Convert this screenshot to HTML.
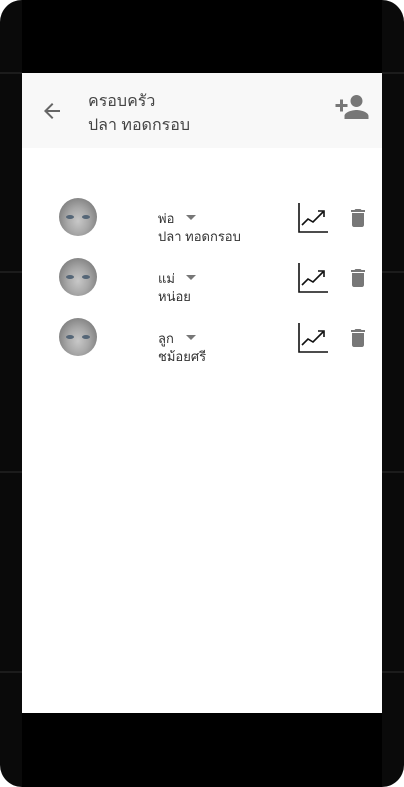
<!DOCTYPE html>
<html><head><meta charset="utf-8"><style>
*{margin:0;padding:0;box-sizing:border-box}
body{width:404px;height:787px;background:#fff;overflow:hidden;position:relative;font-family:"Liberation Sans","Noto Sans CJK SC",sans-serif}
.frame{position:absolute;left:0;top:0;width:404px;height:787px;background:#0a0a0a;border-radius:22px}
.line{position:absolute;left:0;width:404px;height:2px;background:#1c1c1c}
.inner{position:absolute;left:22px;top:0;width:360px;height:787px;background:#000}
.screen{position:absolute;left:22px;top:73px;width:360px;height:640px;background:#fff}
.hdr{position:absolute;left:0;top:0;width:360px;height:75px;background:#f8f8f8}
.t{position:absolute;color:#444;font-size:16px;white-space:nowrap}
.s{position:absolute;color:#333;font-size:13px;white-space:nowrap}
.av{position:absolute;width:38px;height:38px;border-radius:50%;background:radial-gradient(ellipse at 50% 60%,#c8c8c8 0,#a8a8a8 40%,#666 100%);overflow:hidden}
.av:before{content:"";position:absolute;left:7px;top:17px;width:8px;height:4px;border-radius:50%;background:#567}
.av:after{content:"";position:absolute;left:23px;top:17px;width:8px;height:4px;border-radius:50%;background:#567}
.tri{position:absolute;width:0;height:0;border-left:5px solid transparent;border-right:5px solid transparent;border-top:5px solid #777}
</style></head><body>
<div class="frame"></div>
<div class="line" style="top:72px"></div><div class="line" style="top:271px"></div><div class="line" style="top:471px"></div><div class="line" style="top:671px"></div>
<div class="inner"></div>
<div class="screen">
<div class="hdr">
<svg style="position:absolute;left:18px;top:26px" width="24" height="24" viewBox="0 0 24 24"><path d="M20 11H7.83l5.59-5.59L12 4l-8 8 8 8 1.41-1.41L7.83 13H20v-2z" fill="#666"/></svg>
<div class="t" style="left:66px;top:16px">ครอบครัว</div>
<div class="t" style="left:66px;top:40px">ปลา ทอดกรอบ</div>
<svg style="position:absolute;left:312px;top:16px" width="36" height="36" viewBox="0 0 24 24"><path d="M15 12c2.210 0 4-1.79 4-4s-1.79-4-4-4-4 1.79-4 4 1.790 4 4 4zm-9-2V7H4v3H1v2h3v3h2v-3h3v-2H6zm9 4c-2.67 0-8 1.34-8 4v2h16v-2c0-2.66-5.33-4-8-4z" fill="#777"/></svg>
</div>
</div>
<div id="rows"></div>
<script>
var d=[["พ่อ","ปลา ทอดกรอบ",198],["แม่","หน่อย",258],["ลูก","ชม้อยศรี",318]],h="";
d.forEach(function(r){var y=r[2];
h+='<div class="av" style="left:59px;top:'+y+'px"></div>';
h+='<div class="s" style="left:158px;top:'+(y+10)+'px">'+r[0]+'</div>';
h+='<div class="tri" style="left:186px;top:'+(y+17)+'px"></div>';
h+='<div class="s" style="left:158px;top:'+(y+28)+'px">'+r[1]+'</div>';
h+='<svg style="position:absolute;left:298px;top:'+(y+5)+'px" width="31" height="30" viewBox="0 0 31 30"><path d="M1 0V29H30" stroke="#111" stroke-width="1.6" fill="none"/><path d="M4 22l6-6 5 3 10-10M20 8h6v6" stroke="#111" stroke-width="1.6" fill="none"/></svg>';
h+='<svg style="position:absolute;left:346px;top:'+(y+8)+'px" width="24" height="24" viewBox="0 0 24 24"><path d="M6 19c0 1.1.9 2 2 2h8c1.1 0 2-.9 2-2V7H6v12zM19 4h-3.5l-1-1h-5l-1 1H5v2h14V4z" fill="#777"/></svg>';
});
document.getElementById("rows").innerHTML=h;
</script>
</body></html>
